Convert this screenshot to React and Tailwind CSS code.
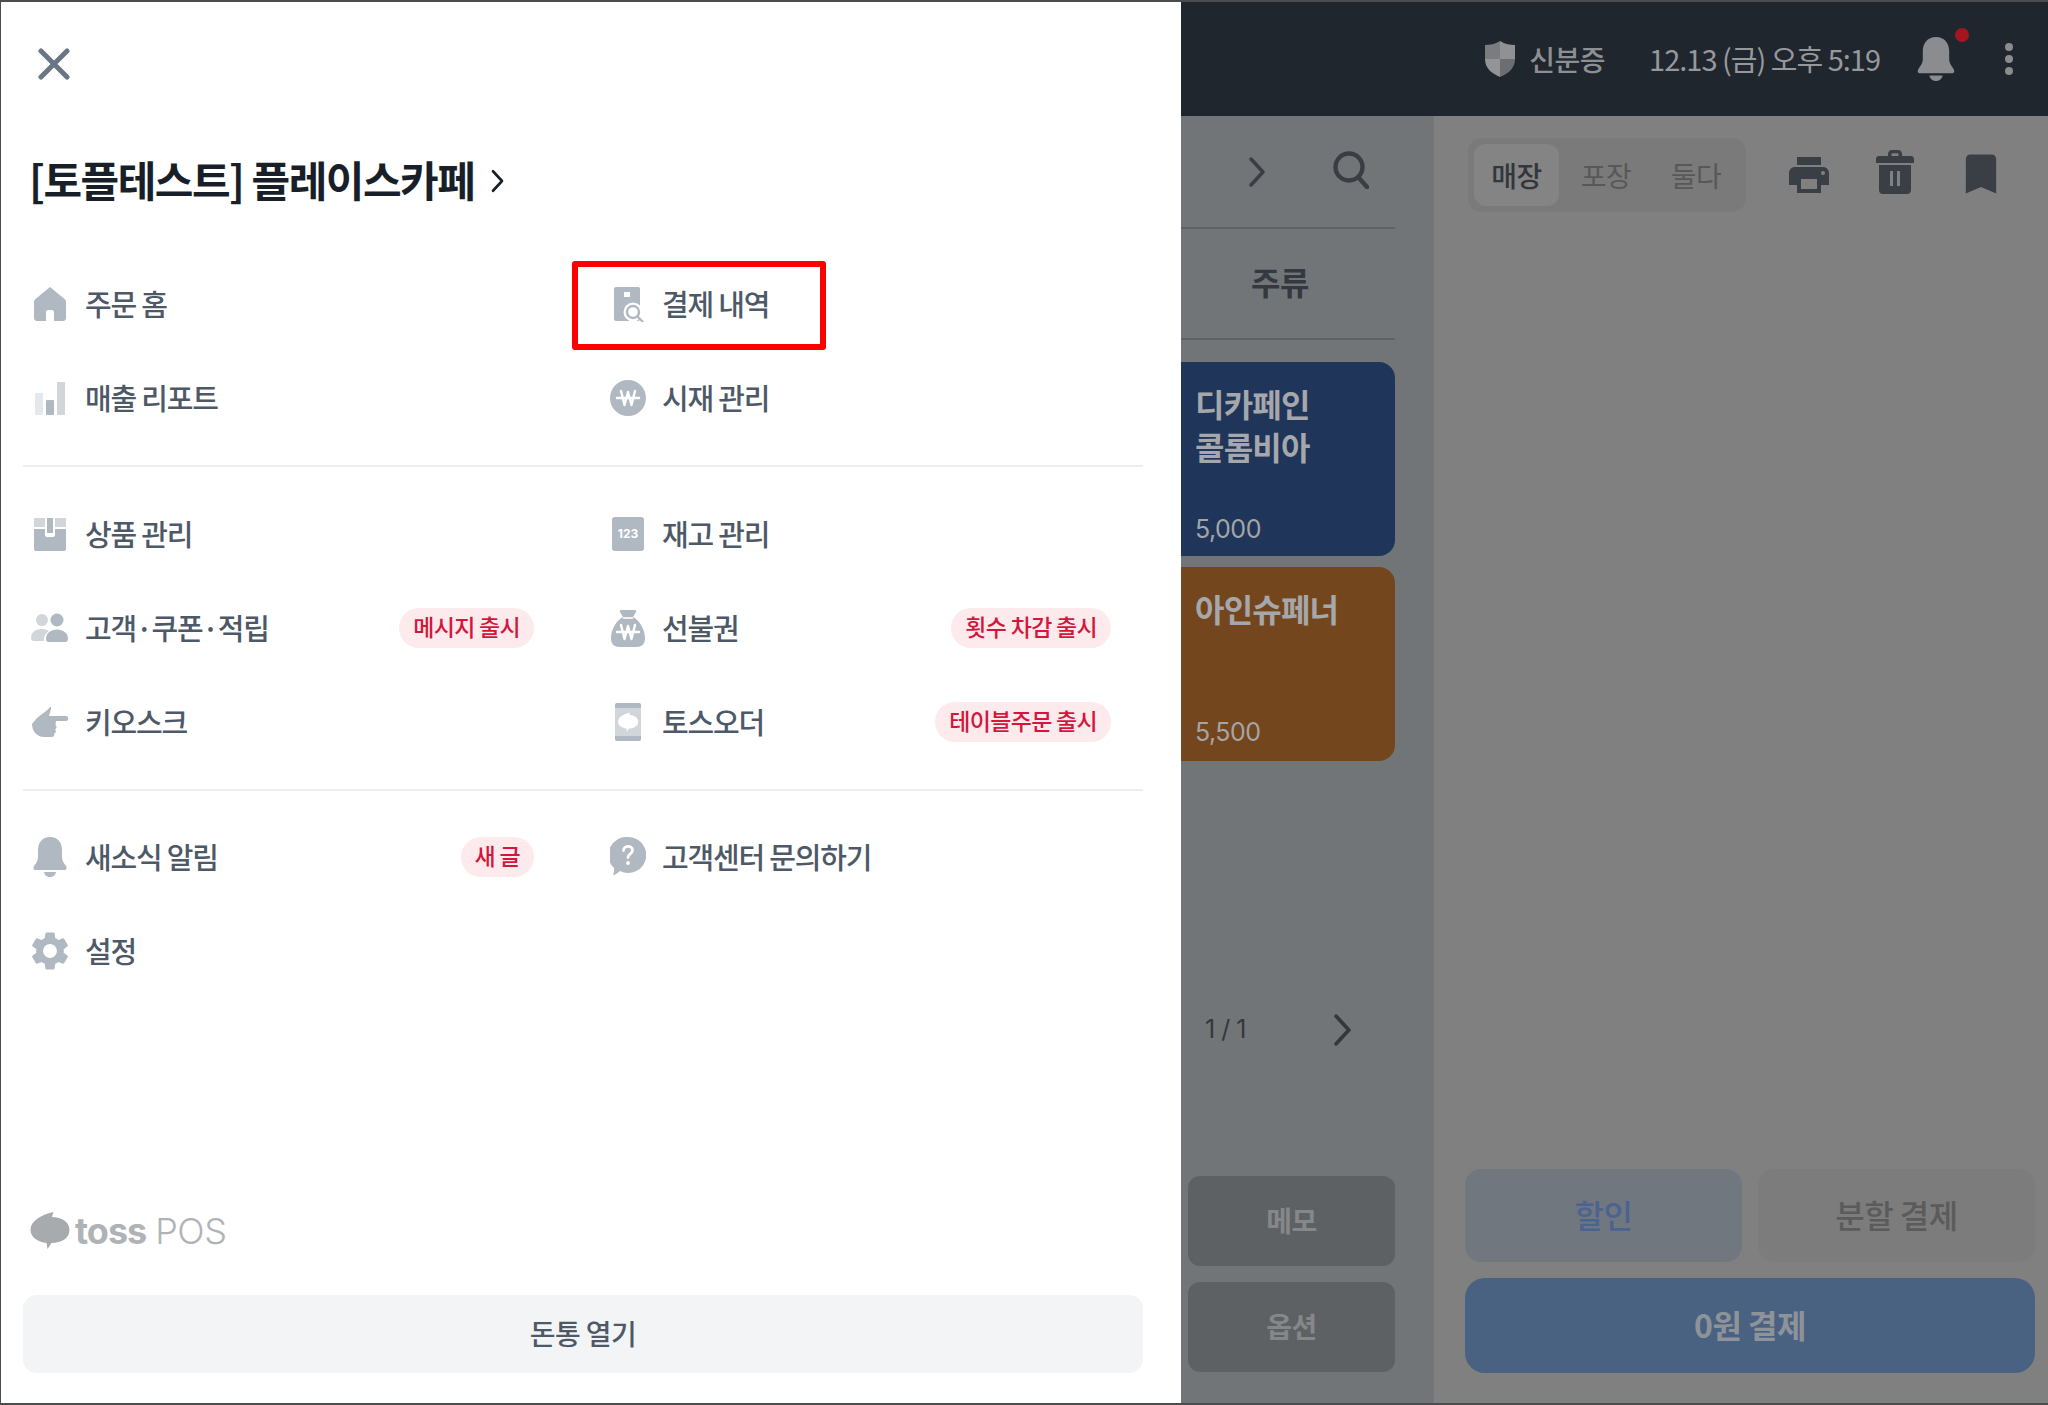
import { MdBookmark, MdPrint, MdSettings } from 'react-icons/md';

const FONT = 'font-["Noto_Sans_CJK_KR","Noto_Sans",sans-serif]';
const TOSS_MARK = 'M23 0C22.500 1.500 22 3 21.500 5 31 5 39 10 39 18c0 8-8 13-18 13l-4 6-1-6C7 30 0 25 0 18 0 9 10 3 23 0z';

const Won = ({ color = '#fff' }) => (
  <path
    d="M7 18h22M11 11l3.500 14L18 12l3.500 13L25 11"
    fill="none"
    stroke={color}
    strokeWidth="2.400"
    strokeLinecap="round"
    strokeLinejoin="round"
  />
);

const icons = {
  home: (
    <svg viewBox="0 0 36 36" className="h-9 w-9">
      <path
        d="M18 1 3.200 13.200C2.400 13.900 2 14.700 2 15.800V32c0 1.700 1.300 3 3 3h9v-9c0-1 .8-2 2-2h4c1.200 0 2 1 2 2v9h9c1.700 0 3-1.300 3-3V15.800c0-1.100-.4-1.900-1.200-2.600z"
        fill="#b0b8c1"
      />
    </svg>
  ),
  chart: (
    <svg viewBox="0 0 36 36" className="h-9 w-9">
      <rect x="3" y="13" width="8" height="22" rx="1" fill="#e5e8eb" />
      <rect x="14" y="20" width="8" height="15" rx="1" fill="#b0b8c1" />
      <rect x="25" y="2" width="8" height="33" rx="1" fill="#d1d6db" />
    </svg>
  ),
  receipt: (
    <svg viewBox="0 0 36 36" className="h-9 w-9">
      <rect x="4" y="1" width="26" height="34" rx="2" fill="#b0b8c1" />
      <rect x="14" y="6" width="6" height="5" fill="#fff" />
      <circle cx="23" cy="26" r="9.500" fill="#fff" />
      <circle cx="23" cy="26" r="6" fill="none" stroke="#b0b8c1" strokeWidth="2.400" />
      <path d="m27.500 30.500 5 5" stroke="#b0b8c1" strokeWidth="2.400" strokeLinecap="round" />
    </svg>
  ),
  won: (
    <svg viewBox="0 0 36 36" className="h-9 w-9">
      <circle cx="18" cy="18" r="18" fill="#b0b8c1" />
      <Won />
    </svg>
  ),
  box: (
    <svg viewBox="0 0 36 36" className="h-9 w-9">
      <path d="M2 2h11v9H2zM23 2h11v9H23z" fill="#d1d6db" />
      <path d="M2 13h11v6c0 1 .8 2 2 2h6c1.200 0 2-1 2-2v-6h11v20c0 1-.8 2-2 2H4c-1.200 0-2-1-2-2z" fill="#b0b8c1" />
      <path d="M15 2h6v15h-6z" fill="#b0b8c1" />
    </svg>
  ),
  stock: (
    <div className="flex h-[34px] w-[32px] items-center justify-center rounded-[3px] bg-[#b0b8c1]">
      <span className='font-["Inter",sans-serif] text-[12px] font-bold leading-none text-white'>123</span>
    </div>
  ),
  people: (
    <svg viewBox="0 0 38 32" className="h-[32px] w-[38px] shrink-0">
      <circle cx="11" cy="8" r="6" fill="#d1d6db" />
      <path d="M0 26c0-6 5-9 11-9 3 0 5 .7 7 2-3 2-5 4.500-5 8v2H3c-2 0-3-1-3-3z" fill="#d1d6db" />
      <circle cx="26" cy="8" r="6.500" fill="#b0b8c1" />
      <path d="M15 27c0-6 5-9.500 11-9.500S37 21 37 27c0 2-1 3-3 3H18c-2 0-3-1-3-3z" fill="#b0b8c1" />
    </svg>
  ),
  bag: (
    <svg viewBox="0 0 36 38" className="h-[38px] w-9">
      <path
        d="M11 1h14c1 0 1.500 1 1 2l-3 5c6 3 12 12 12 21 0 6-3 9-9 9H10c-6 0-9-3-9-9 0-9 6-18 12-21L10 3c-.5-1 0-2 1-2z"
        fill="#b0b8c1"
      />
      <path d="M13 9h10" stroke="#fff" strokeWidth="1.600" />
      <g transform="translate(0 5)">
        <Won />
      </g>
    </svg>
  ),
  kiosk: (
    <svg viewBox="0 0 37 30" className="h-[30px] w-[37px] shrink-0">
      <path
        d="M18 0C16 3 10 7 5 11L0 17c0 7 5 13 12 13h8c2 0 3-2 2-3.500 2-.5 2.500-3 1-4 2-1 2-3.500.5-4.500l.5-4h10c3 0 3-5 0-5H17l2-7c.5-2-.5-2.500-1-2z"
        fill="#b0b8c1"
      />
    </svg>
  ),
  order: (
    <svg viewBox="0 0 36 38" className="h-[38px] w-9">
      <rect x="5" y="0" width="26" height="38" rx="2" fill="#d1d6db" />
      <path d="M5 2c0-1 1-2 2-2h22c1 0 2 1 2 2v3H5zM5 33h26v3c0 1-1 2-2 2H7c-1 0-2-1-2-2z" fill="#b0b8c1" />
      <path d={TOSS_MARK} transform="translate(8 9.500) scale(.52)" fill="#fff" />
    </svg>
  ),
  bell: (
    <svg viewBox="0 0 36 40" className="h-[40px] w-9">
      <path
        d="M18 0C10 0 6 6 6 13v7c0 4-2 6-4 9-1 2-1 4 2 4h28c3 0 3-2 2-4-2-3-4-5-4-9v-7C30 6 26 0 18 0z"
        fill="#b0b8c1"
      />
      <path d="M12 35h12c-.5 3-3 5-6 5s-5.500-2-6-5z" fill="#b0b8c1" />
    </svg>
  ),
  gear: <MdSettings className="h-[46px] w-[46px] shrink-0 text-[#b0b8c1]" />,
  help: (
    <svg viewBox="0 0 36 40" className="h-[40px] w-9">
      <path d="M18 0a18 18 0 1 1-8 34c-2 2-4 3-6 4-1 0-1-.5-.7-1 .8-2 1-4 .7-6A18 18 0 0 1 18 0z" fill="#b0b8c1" />
      <path
        d="M13.500 13.500c0-2.500 2-4.200 4.500-4.200s4.500 1.600 4.500 4c0 3.600-4.500 3.600-4.500 7.200"
        fill="none"
        stroke="#fff"
        strokeWidth="2.800"
        strokeLinecap="round"
      />
      <circle cx="18" cy="26" r="1.900" fill="#fff" />
    </svg>
  ),
};

const Badge = ({ children }) => (
  <span className="ml-auto flex h-10 items-center rounded-full bg-[#fdeaec] px-[14px] pb-[3px] text-[23px] font-medium tracking-[-0.7px] text-[#d4163c]">
    {children}
  </span>
);

const MenuItem = ({ icon, label, badge, right }) => (
  <div className={`flex h-[94px] items-center pl-[9px] ${right ? 'pr-[32px]' : 'pr-[67px]'}`}>
    <div className="flex h-10 w-[36px] items-center justify-center">{icons[icon]}</div>
    <span className={`text-[29px] font-medium tracking-[-1.200px] text-[#4e5968] ${right ? 'ml-[16px]' : 'ml-[17px]'}`}>{label}</span>
    {badge ? <Badge>{badge}</Badge> : null}
  </div>
);

const Group = ({ children }) => <div className="grid grid-cols-[578px_542px]">{children}</div>;

const Divider = () => <div className="my-[20px] h-[2px] bg-[#eceef0]" />;

const Chevron = ({ className }) => (
  <svg viewBox="0 0 18 32" className={className} fill="none" stroke="currentColor" strokeWidth="3.500" strokeLinecap="round" strokeLinejoin="round">
    <path d="m3 3 12 13L3 29" />
  </svg>
);

const MenuCard = ({ name, price, color, priceClass }) => (
  <div className={`flex h-[194px] w-[214px] flex-col justify-between rounded-r-[16px] pl-[14px] pt-[20px] ${priceClass} ${color}`}>
    <p className="whitespace-pre-line text-[32px] font-bold leading-[43px] tracking-[-0.8px] text-[#a5a7aa]">{name}</p>
    <p className='font-["Inter",sans-serif] text-[25px] leading-[34px] tracking-[-0.5px] text-[#a3a5a8]'>{price}</p>
  </div>
);

export default function App() {
  return (
    <div className={`relative flex h-[1405px] w-[2048px] overflow-hidden border-y-2 border-l border-[#4a4c4f] ${FONT}`}>
      {/* side menu */}
      <aside className="flex w-[1180px] shrink-0 flex-col bg-white pl-[22px] pr-[38px] pb-[30px]">
        <svg viewBox="0 0 32 32" className="ml-[15px] mt-[46px] h-[32px] w-[32px] text-[#6b7684]" fill="none" stroke="currentColor" strokeWidth="5" strokeLinecap="round">
          <path d="m3 3 26 26M29 3 3 29" />
        </svg>
        <div className="ml-[6px] mt-[75px] flex h-[48px] items-center">
          <h1 className="text-[42px] font-bold leading-none tracking-[-1.500px] text-[#191f28]">[토플테스트] 플레이스카페</h1>
          <Chevron className="ml-[16px] mt-[3px] h-[24px] w-[15px] text-[#191f28]" />
        </div>

        <div className="mt-[54px]">
          <Group>
            <MenuItem icon="home" label="주문 홈" />
            <MenuItem icon="receipt" label="결제 내역" right />
            <MenuItem icon="chart" label="매출 리포트" />
            <MenuItem icon="won" label="시재 관리" right />
          </Group>
          <Divider />
          <Group>
            <MenuItem icon="box" label="상품 관리" />
            <MenuItem icon="stock" label="재고 관리" right />
            <MenuItem icon="people" label="고객·쿠폰·적립" badge="메시지 출시" />
            <MenuItem icon="bag" label="선불권" badge="횟수 차감 출시" right />
            <MenuItem icon="kiosk" label="키오스크" />
            <MenuItem icon="order" label="토스오더" badge="테이블주문 출시" right />
          </Group>
          <Divider />
          <div className="-mt-[1px]">
            <Group>
              <MenuItem icon="bell" label="새소식 알림" badge="새 글" />
              <MenuItem icon="help" label="고객센터 문의하기" right />
              <MenuItem icon="gear" label="설정" />
            </Group>
          </div>
        </div>

        <div className="mt-auto mb-[5px] ml-[7px] flex items-center">
          <svg viewBox="0 0 39 37" className="h-[37px] w-[40px]">
            <path d={TOSS_MARK} fill="#a8abae" />
          </svg>
          <span className='ml-[5px] font-["Inter",sans-serif] text-[36px] font-bold leading-none tracking-[-1px] text-[#b0b3b6]'>toss</span>
          <span className='ml-[9px] font-["Inter",sans-serif] text-[36px] font-light leading-none tracking-[-0.5px] text-[#b0b3b6]'>POS</span>
        </div>
        <button className="mt-[41px] h-[78px] rounded-[14px] bg-[#f2f4f6] pb-[3px] text-[28px] font-medium tracking-[-0.6px] text-[#4e5968]">돈통 열기</button>
      </aside>

      {/* dimmed POS screen */}
      <div className="flex min-w-0 flex-1 flex-col">
        <header className="flex h-[114px] shrink-0 items-center justify-end bg-[#1f262e] pr-[35px]">
          <svg viewBox="0 0 32 36" className="h-[36px] w-[32px]">
            <path d="M16 0c5 3 10 4 15 4v14H16z" fill="#8f9193" />
            <path d="M16 0C11 3 6 4 1 4v14h15z" fill="#7a7c7f" />
            <path d="M1 18h15v18C7 32 1 27 1 18z" fill="#929496" />
            <path d="M31 18H16v18c9-4 15-9 15-18z" fill="#6c6e71" />
          </svg>
          <span className="ml-[13px] text-[28px] font-medium tracking-[-0.5px] text-[#8d8f92]">신분증</span>
          <span className="ml-[44px] text-[29px] tracking-[-1px] text-[#96989b]">12.13 (금) 오후 5:19</span>
          <div className="relative ml-[36px]">
            <svg viewBox="0 0 36 40" className="h-[44px] w-[40px]">
              <path d="M18 0C10 0 6 6 6 13v7c0 4-2 6-4 9-1 2-1 4 2 4h28c3 0 3-2 2-4-2-3-4-5-4-9v-7C30 6 26 0 18 0z" fill="#8a8c8f" />
              <path d="M12 35h12c-.5 3-3 5-6 5s-5.500-2-6-5z" fill="#8a8c8f" />
            </svg>
            <span className="absolute -right-[13px] -top-[9px] h-[14px] w-[14px] rounded-full bg-[#a3161f]" />
          </div>
          <div className="ml-[49px] flex flex-col gap-[4px]">
            <span className="h-[8px] w-[8px] rounded-full bg-[#8a8c8f]" />
            <span className="h-[8px] w-[8px] rounded-full bg-[#8a8c8f]" />
            <span className="h-[8px] w-[8px] rounded-full bg-[#8a8c8f]" />
          </div>
        </header>

        <div className="flex min-h-0 flex-1">
          {/* menu column */}
          <section className="flex w-[253px] shrink-0 flex-col bg-[#727578]">
            <div className="flex h-[113px] w-[214px] items-center border-b-2 border-[#5f6265] text-[#3a3e44]">
              <Chevron className="ml-[67px] h-[32px] w-[18px]" />
              <svg viewBox="0 0 36 38" className="ml-[67px] mb-[4px] h-[38px] w-[36px]" fill="none" stroke="currentColor" strokeWidth="4.400" strokeLinecap="round">
                <circle cx="16" cy="16" r="13.500" />
                <path d="m26 27 8 9" />
              </svg>
            </div>
            <div className="flex h-[111px] w-[214px] items-center justify-center border-b-2 border-[#5f6265] pb-[6px] pr-[16px] text-[32px] font-bold tracking-[-0.5px] text-[#35393f]">주류</div>
            <div className="mt-[22px] flex flex-col gap-[11px]">
              <MenuCard name={'디카페인\n콜롬비아'} price="5,000" color="bg-[#1f3559]" priceClass="pb-[10px]" />
              <MenuCard name="아인슈페너" price="5,500" color="bg-[#74461e]" priceClass="pb-[12px] -translate-y-0" />
            </div>
            <div className="mt-[249px] flex h-[40px] w-[214px] items-center text-[#34383d]">
              <span className='ml-[24px] font-["Inter",sans-serif] text-[25px] tracking-[-0.5px]'>1 / 1</span>
              <Chevron className="ml-[86px] h-[34px] w-[21px]" />
            </div>
            <div className="mt-[126px] flex flex-col gap-[16px] pl-[7px]">
              <button className="h-[90px] w-[207px] rounded-[12px] bg-[#5e6164] pb-[2px] text-[28px] font-bold tracking-[-0.5px] text-[#85878a]">메모</button>
              <button className="h-[90px] w-[207px] rounded-[12px] bg-[#5e6164] pb-[2px] text-[28px] font-bold tracking-[-0.5px] text-[#85878a]">옵션</button>
            </div>
          </section>

          {/* order column */}
          <section className="flex min-w-0 flex-1 flex-col bg-[#808080] pl-[31px] pr-[13px]">
            <div className="mt-[22px] flex items-center">
              <div className="ml-[3px] flex h-[74px] w-[278px] items-center rounded-[14px] bg-[#7a7a7a] pl-[6px] text-[28px] tracking-[-0.5px]">
                <span className="flex h-[62px] w-[85px] items-center justify-center rounded-[12px] bg-[#848484] font-medium text-[#33363a]">매장</span>
                <span className="ml-[2px] w-[90px] text-center text-[#585858]">포장</span>
                <span className="w-[90px] text-center text-[#585858]">둘다</span>
              </div>
              <div className="ml-[39px] flex items-center text-[#3a3f46]">
                <MdPrint className="h-[48px] w-[48px]" />
                <svg viewBox="0 0 38 44" className="ml-[43px] mb-[6px] h-[44px] w-[38px]" fill="currentColor">
                  <path d="M12 6V4c0-2 1.500-4 4-4h6c2.500 0 4 2 4 4v2h9c1.700 0 3 1.300 3 3v4H0V9c0-1.700 1.300-3 3-3zm3.500 0h7V4c0-.5-.3-.8-1-.8h-5c-.7 0-1 .3-1 .8z" />
                  <path fillRule="evenodd" d="M3 15h32v25c0 2.500-1.500 4-4 4H7c-2.500 0-4-1.500-4-4zm11 6v15h3V21zm7 0v15h3V21z" />
                </svg>
                <MdBookmark className="ml-[41px] mb-[2px] h-[52px] w-[52px]" />
              </div>
            </div>

            <div className="mt-auto mb-[30px] flex flex-col gap-[16px]">
              <div className="grid grid-cols-2 gap-[16px]">
                <button className="h-[93px] rounded-[16px] bg-[#70777f] pb-[3px] text-[32px] font-medium tracking-[-0.5px] text-[#4a6390]">할인</button>
                <button className="h-[93px] rounded-[16px] bg-[#7c7c7c] pb-[3px] text-[32px] font-medium tracking-[-0.5px] text-[#5b5b5b]">분할 결제</button>
              </div>
              <button className="h-[95px] rounded-[20px] bg-[#4a6281] pb-[3px] text-[32px] font-bold tracking-[-0.5px] text-[#8e9399]">0원 결제</button>
            </div>
          </section>
        </div>
      </div>

      {/* red callout */}
      <div className="absolute left-[571px] top-[259px] h-[89px] w-[254px] rounded-[3px] border-[6px] border-[#fe0000]" />
    </div>
  );
}
